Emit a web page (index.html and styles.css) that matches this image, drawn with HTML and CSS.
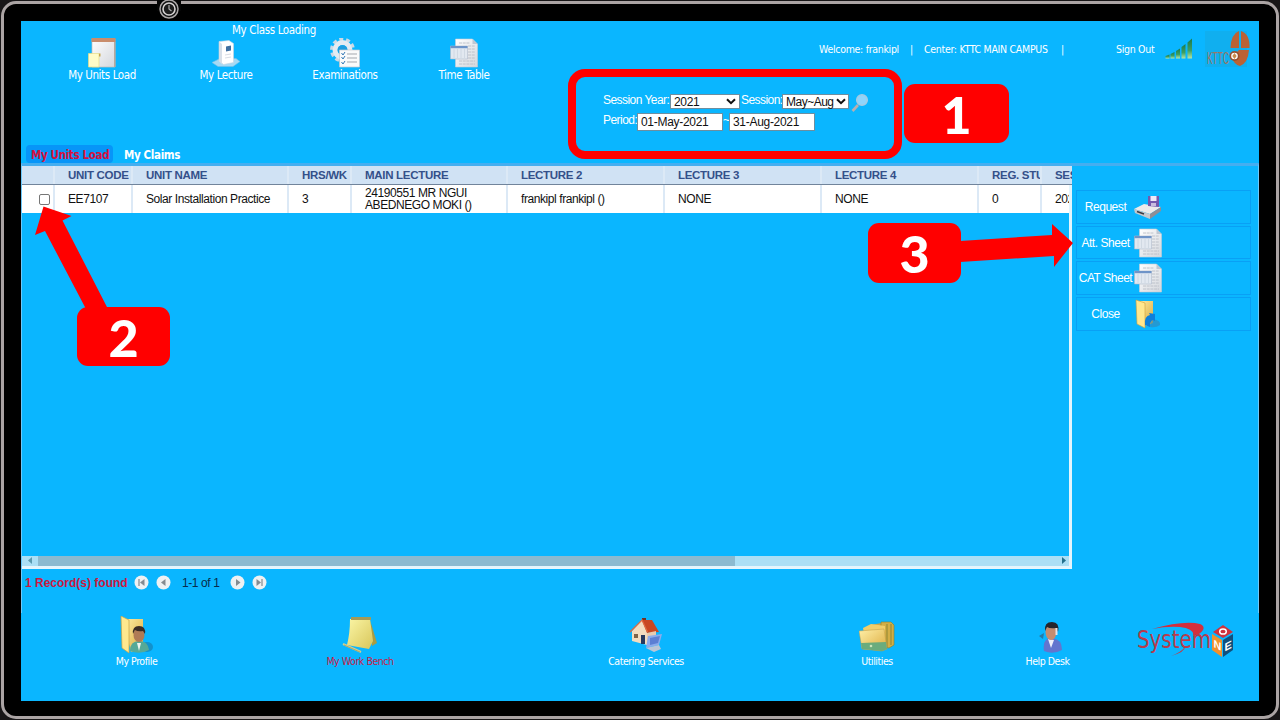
FILE: index.html
```html
<!DOCTYPE html>
<html lang="en">
<head>
<meta charset="utf-8">
<title>My Units Load</title>
<link rel="stylesheet" href="styles.css">
</head>
<body>
<svg class="defs" width="0" height="0">
  <defs>
    <linearGradient id="gold" x1="0" y1="0" x2="1" y2="1"><stop offset="0" stop-color="#fff0a8"/><stop offset="1" stop-color="#dba93c"/></linearGradient>
    <linearGradient id="paper" x1="0" y1="0" x2="1" y2="1"><stop offset="0" stop-color="#ffffff"/><stop offset="1" stop-color="#d3d6dc"/></linearGradient>
    <linearGradient id="note" x1="0" y1="0" x2="1" y2="1"><stop offset="0" stop-color="#fbf6a6"/><stop offset="1" stop-color="#d8c65a"/></linearGradient>
    <linearGradient id="bars" x1="0" y1="0" x2="0" y2="1"><stop offset="0" stop-color="#1b7a4c"/><stop offset=".6" stop-color="#3f9f62"/><stop offset="1" stop-color="#b6e6a8"/></linearGradient>
    <symbol id="sheet" viewBox="0 0 28 30">
      <path d="M5.500 1h17l5 5v23h-22z" fill="url(#paper)" stroke="#c4ccd6" stroke-width=".6"/>
      <path d="M22.500 1l5 5h-5z" fill="#bfc7d2"/>
      <path d="M9 5h11M18 8h7M18 11h7M18 14h7M18 17h7M18 20h7M9 23h16M9 26h16" stroke="#b9bdc6" stroke-width=".9" stroke-dasharray="3 .7"/>
      <path d="M.5 8h17v13h-17z" fill="#e2e8f0" stroke="#aeb9ca" stroke-width=".6"/>
      <path d="M.5 8h17v2.200h-17z" fill="#6f94c8"/>
      <path d="M4 11v9M7.500 11v9M11 11v9M14.500 11v9" stroke="#ccd4e0" stroke-width=".8"/>
    </symbol>
  </defs>
</svg>
<div class="device">
  <div class="screen">
    <header class="header">
      <div class="header-left">
        <div class="title">My Class Loading</div>
        <nav class="topnav">
          <a class="nav-item w124"><svg width="30" height="30" viewBox="0 0 30 30"><path d="M5 1h23v28H5z" fill="url(#paper)" stroke="#c9bfb6" stroke-width=".7"/><path d="M4.500 0h24v4h-24z" fill="#c98d6c"/><path d="M27 4h1.500v25H27z" fill="#b9a89c"/><path d="M1.500 15.500h10.500v13.500H1.500z" fill="#fffcc8" stroke="#e6dc85" stroke-width=".7"/><path d="M12 15.500h1.500v3H12z" fill="#c5a54f"/></svg><span>My Units Load</span></a>
          <a class="nav-item w124"><svg width="30" height="30" viewBox="0 0 30 30"><path d="M1 24.500l8-4h16l4 3-7 5H7z" fill="#a5d9f4" stroke="#74bfe6" stroke-width=".6"/><path d="M8 3.500l10-1 4.500 3v19l-10 2L8 23z" fill="#fff" stroke="#cad4df" stroke-width=".6"/><path d="M8 3.500l3 2.500v20L8 23z" fill="#d7dfe8"/><path d="M15 8.500l5-1v5l-5 1z" fill="#3f6fa0"/><path d="M14 17l6-1M14 20l6-1" stroke="#d8dde4"/></svg><span>My Lecture</span></a>
          <a class="nav-item w114"><svg width="30" height="30" viewBox="0 0 30 30"><circle cx="12.500" cy="12" r="11" fill="none" stroke="#cdd9e4" stroke-width="3" stroke-dasharray="4 2.900"/><circle cx="12.500" cy="12" r="7.500" fill="none" stroke="#e4ebf2" stroke-width="5"/><circle cx="12.500" cy="12" r="4.800" fill="#1e9ee0"/><path d="M9.500 12h20v17h-20z" fill="#fafafa" stroke="#c4c8ce" stroke-width=".7"/><path d="M17 16h10M17 20h10M17 24h10" stroke="#a3a7ad" stroke-width="1"/><path d="M11.500 15l1.500 2 2-3M11.500 19l1.500 2 2-3M11.500 24l1.500 2 2-3" stroke="#3478b5" fill="none"/></svg><span>Examinations</span></a>
          <a class="nav-item w124"><svg width="28" height="30"><use href="#sheet"/></svg><span>Time Table</span></a>
        </nav>
        <div class="tabs"><span class="tab tab-active">My Units Load</span><span class="tab">My Claims</span></div>
      </div>
      <div class="header-right">
        <div class="userbar">
          <span class="u-welcome">Welcome: frankipl</span><span class="u-sep1">|</span><span class="u-center">Center: KTTC MAIN CAMPUS</span><span class="u-sep2">|</span><span class="u-out">Sign Out</span>
          <svg class="signal" width="28" height="22" viewBox="0 0 28 22"><g fill="url(#bars)"><path d="M.5 18l4-1.500v4h-4z"/><path d="M5.500 16l4-2v6.500h-4z"/><path d="M11 13l4-2.500v10h-4z"/><path d="M16.500 9l4-3v14.500h-4z"/><path d="M22.500 4.500L27 .5v20h-4.500z"/></g></svg>
          <svg class="kttc" width="46" height="36" viewBox="0 0 46 36"><path d="M0 0h42v36H0z" fill="#10afef"/><path d="M34 0q-8 3-8.500 17h8.500z" fill="#bb6235"/><path d="M36 0q9 3 8.500 17H36z" fill="#bb6235"/><path d="M44 19q-1 13-9 16-6-1-8-9l7-7z" fill="#bb6235"/><text x="2" y="33" class="kttc-text" textLength="22" lengthAdjust="spacingAndGlyphs">KTTC</text><circle cx="29.500" cy="25" r="5" fill="#9a512d"/><circle cx="29.500" cy="25" r="3.300" fill="#fff"/><path d="M29.500 22l2.200 3-2.200 3-2.200-3z" fill="#c98b4a"/></svg>
        </div>
        <form class="filter">
          <div class="frow">
            <span class="lbl lbl-year">Session Year:</span><span class="field sel-year">2021<svg width="10" height="7" viewBox="0 0 10 7"><path d="M1 1.200l4 4 4-4" fill="none" stroke="#111" stroke-width="2"/></svg></span><span class="lbl lbl-session">Session:</span><span class="field sel-session">May~Aug<svg width="10" height="7" viewBox="0 0 10 7"><path d="M1 1.200l4 4 4-4" fill="none" stroke="#111" stroke-width="2"/></svg></span>
            <svg class="lens" width="18" height="20" viewBox="0 0 18 20"><path d="M7 12l-5.500 6" stroke="#b8aeb0" stroke-width="2.600"/><circle cx="11" cy="7" r="5.300" fill="#8fd4fb" stroke="#a5cbe4" stroke-width="1.500"/></svg>
          </div>
          <div class="frow frow2">
            <span class="lbl lbl-period">Period:</span><span class="field date">01-May-2021</span><span class="lbl tilde">~</span><span class="field date">31-Aug-2021</span>
          </div>
        </form>
      </div>
    </header>

    <main class="main">
      <section class="grid-area">
        <div class="gridbox">
          <div class="row head"><span></span><span>UNIT CODE</span><span>UNIT NAME</span><span>HRS/WK</span><span>MAIN LECTURE</span><span>LECTURE 2</span><span>LECTURE 3</span><span>LECTURE 4</span><span>REG. STU</span><span>SES</span></div>
          <div class="row body"><span class="check"><i class="box"></i></span><span>EE7107</span><span>Solar Installation Practice</span><span>3</span><span>24190551 MR NGUI<br>ABEDNEGO MOKI ()</span><span>frankipl frankipl ()</span><span>NONE</span><span>NONE</span><span>0</span><span>202</span></div>
          <div class="empty"></div>
          <div class="scroll">
            <svg width="16" height="9" viewBox="0 0 16 9"><path d="M10 1v7L6 4.500z" fill="#5a9aaf"/></svg>
            <div class="thumb"></div>
            <svg class="scroll-right" width="10" height="9" viewBox="0 0 10 9"><path d="M3 1v7l4-3.500z" fill="#22708c"/></svg>
          </div>
        </div>
        <div class="pager">
          <span class="found">1 Record(s) found</span>
          <svg width="15" height="15" viewBox="0 0 15 15"><circle cx="7.500" cy="7.500" r="7" fill="#eef1f3"/><path d="M10.500 4v7L6 7.500z" fill="#858b91"/><path d="M5 4v7" stroke="#858b91" stroke-width="1.200"/></svg>
          <svg class="p-prev" width="15" height="15" viewBox="0 0 15 15"><circle cx="7.500" cy="7.500" r="7" fill="#eef1f3"/><path d="M9.500 4v7L5 7.500z" fill="#858b91"/></svg>
          <span class="pages">1-1 of 1</span>
          <svg width="15" height="15" viewBox="0 0 15 15"><circle cx="7.500" cy="7.500" r="7" fill="#eef1f3"/><path d="M6 4v7l4.500-3.500z" fill="#858b91"/></svg>
          <svg class="p-last" width="15" height="15" viewBox="0 0 15 15"><circle cx="7.500" cy="7.500" r="7" fill="#eef1f3"/><path d="M4.500 4v7L9 7.500z" fill="#858b91"/><path d="M10 4v7" stroke="#858b91" stroke-width="1.200"/></svg>
        </div>
      </section>
      <aside class="side">
        <div class="action"><span>Request</span><svg width="28" height="28" viewBox="0 0 28 28"><path d="M0 16l10-5 17 3-11 7z" fill="#eceaea"/><path d="M0 16l16 5v5L1 20z" fill="#c7c8cc"/><path d="M16 21l11-7v4l-11 8z" fill="#8e8e96"/><path d="M3 18.500l7 2.500" stroke="#393b44" stroke-width="1.500"/><path d="M14 3h11v11l-11-1z" fill="#7359ad"/><path d="M16.500 3h6v5h-6z" fill="#eee8f8"/><path d="M17 10h5v3h-5z" fill="#c8bddf"/></svg></div>
        <div class="action"><span>Att. Sheet</span><svg width="28" height="30"><use href="#sheet"/></svg></div>
        <div class="action"><span>CAT Sheet</span><svg width="28" height="30"><use href="#sheet"/></svg></div>
        <div class="action"><span>Close</span><svg width="28" height="30" viewBox="0 0 28 30"><path d="M3 2h16v22l-7 3z" fill="url(#gold)"/><path d="M2 1l9 3v25l-8-4z" fill="#ffe78e" stroke="#cfa03b" stroke-width=".6"/><path d="M18 20q9 1 8 6-4 3-10 2z" fill="#3387b7" opacity=".6"/><path d="M11 26q-1-9 5-10l-1-2 6 1v7l-2-1q-3 1-3 7z" fill="#0c7fdb"/></svg></div>
      </aside>
    </main>

    <footer class="footer">
      <a class="foot-item f1"><svg width="36" height="38" viewBox="0 0 36 38"><path d="M4 3h20v29l-12 4z" fill="url(#gold)"/><path d="M2 0l8 4v33l-7-5z" fill="#ffe88e" stroke="#caa344" stroke-width=".7"/><ellipse cx="28" cy="31" rx="6" ry="5" fill="#1978a8" opacity=".6"/><path d="M11 35q0-10 9-10t10 9q-9 5-19 1z" fill="#55a997"/><path d="M18 27l2 8 2-8z" fill="#edf4ee"/><ellipse cx="20" cy="19" rx="5.500" ry="7" fill="#b07b56"/><path d="M14 18q-1-8 6-8t6 8l-2-3q-5 1-8-1z" fill="#3a2b25"/></svg><span>My Profile</span></a>
      <a class="foot-item f2 current"><svg width="36" height="38" viewBox="0 0 36 38"><path d="M28 4l7 23-5 3z" fill="#a99c42"/><path d="M8 3h20l3 22-4 8-22-4Q8 17 8 3z" fill="url(#note)"/><path d="M9 1h20v3H9z" fill="#a49a58"/><path d="M1 28l18 8" stroke="#d3cf8d" stroke-width="2"/><path d="M2 29l16 7" stroke="#84804c" stroke-width=".5"/></svg><span>My Work Bench</span></a>
      <a class="foot-item f3"><svg width="36" height="38" viewBox="0 0 36 38"><path d="M14 2h4v8h-4z" fill="#713225"/><path d="M4 15l10-11 5 11v14L4 25z" fill="#f3dcbf"/><path d="M14 4h10l7 12-12 1z" fill="#c94722"/><path d="M2 16L14 4l5.500 12" fill="none" stroke="#df6941" stroke-width="1.300"/><path d="M19 17l9-2v11l-9 3z" fill="#e8cbb0"/><path d="M13 19h4v9h-4z" fill="#26395f"/><path d="M6 18h4v4H6z" fill="#806449"/><path d="M20 20l14-2-3 11-13 3z" fill="#8babeb"/><path d="M22 22l10-2-2 7-8 2z" fill="#5c7fd3"/><path d="M18 32l13-3 2 4-7 3z" fill="#bbc6d5"/></svg><span>Catering Services</span></a>
      <a class="foot-item f4"><svg width="36" height="38" viewBox="0 0 36 38"><path d="M11 9l12-2 2 3v21l-10 1z" fill="#d3a544"/><path d="M22 6h10l3 3v20l-5 3-8-2z" fill="#d2ae46" stroke="#86802f" stroke-width=".6"/><path d="M28 8v23M32 8v21" stroke="#8c8534" stroke-width="1"/><path d="M4 12l8-4 14 2v22H8z" fill="#f1ce6b"/><path d="M0 15l25-2 3 20-5 2L3 33z" fill="url(#gold)" stroke="#bf9844" stroke-width=".5"/><path d="M2 27l25-1 1 7-5 2-20-2z" fill="#6aac7d"/><circle cx="12" cy="30" r="1.300" fill="#cae4b9"/></svg><span>Utilities</span></a>
      <a class="foot-item f5"><svg width="36" height="38" viewBox="0 0 36 38"><path d="M14 35q-2-13 8-13 10 1 10 12-9 5-18 1z" fill="#6275ce"/><path d="M18 23l3 9 3-8z" fill="#eef0fa"/><ellipse cx="21" cy="16" rx="5.500" ry="8" fill="#c48c6f"/><path d="M15 15q-1-9 7-9t6 10l-2-4q-6 1-9-1z" fill="#25252c"/><path d="M26.500 12v7" fill="none" stroke="#e5e4e9" stroke-width="2"/><path d="M14 17l-5 3 4 3z" fill="#267ba6"/></svg><span>Help Desk</span></a>
      <svg class="system-logo" width="97" height="38" viewBox="0 0 97 38"><path d="M15 7Q47-2 63 2q5 2 3 6-3 5-10 6 2-7-13-9Q30 4 15 7z" fill="#d32f3d"/><text x="0" y="26" class="system-text" textLength="74" lengthAdjust="spacingAndGlyphs">System</text><path d="M34 34q9-3 14-9 0 5-14 9z" fill="#c8363f"/><path d="M86 3l10 7-10 6-10-6z" fill="#cf333d"/><path d="M75 12l10 6v17l-10-7z" fill="#f0912c"/><path d="M86 18l10-6v16l-10 7z" fill="#124f7c"/><ellipse cx="86" cy="9.500" rx="3.300" ry="2.600" fill="none" stroke="#fff" stroke-width="1.500"/><text class="cube" transform="matrix(1 .5 0 1 76.500 25)">N</text><text class="cube" transform="matrix(1 -.5 0 1 87.500 29.500)">E</text></svg>
    </footer>
  </div>
  <svg class="clock" width="24" height="22" viewBox="0 0 24 22"><path d="M0 0h24v12H0z" fill="#050505"/><circle cx="12" cy="10" r="9" fill="#111" stroke="#aaa6a6" stroke-width="1.500"/><circle cx="12" cy="10" r="6" fill="#1d1d1d" stroke="#d5d2d2" stroke-width="1.600"/><path d="M12 6v4l2.500 2" stroke="#aaa" fill="none" stroke-width="1.200"/></svg>
</div>
<svg class="arrows" width="1280" height="720" viewBox="0 0 1280 720"><g fill="#f00"><path d="M43.500 206.500L71.500 216 62.500 220.500 108 309H86L45 231l-10 4z"/><path d="M960 241l92-6v-11l21 19-19 24v-11l-94 6z"/></g></svg>
<div class="highlight"></div>
<div class="callout c1">1</div>
<div class="callout c2">2</div>
<div class="callout c3">3</div>
</body>
</html>
```
FILE: styles.css
```css
* { box-sizing: border-box; }
body { margin: 0; width: 1280px; height: 720px; overflow: hidden; background: #181617; font-family: "DejaVu Sans Condensed", "Noto Sans", sans-serif; font-size: 11px; color: #fff; position: relative; }
svg { display: block; flex: none; }
.defs { position: absolute; }
.device { width: 1278px; height: 718px; margin: 1px; border: 3px solid #aba4a4; border-radius: 15px; background: #000; padding: 17px; position: relative; }
.clock { position: absolute; left: 153px; top: -5px; }
.screen { width: 1238px; height: 680px; background: #0ab6ff; display: flex; flex-direction: column; white-space: nowrap; }

.header { height: 142px; display: flex; flex: none; }
.header-left { width: 526px; display: flex; flex-direction: column; }
.title { height: 17px; line-height: 18px; width: 506px; text-align: center; font-size: 11.500px; letter-spacing: -.35px; }
.topnav { display: flex; height: 45px; padding-left: 19px; }
.nav-item { display: flex; flex-direction: column; align-items: center; line-height: 15px; font-size: 11.500px; letter-spacing: -.4px; }
.w124 { width: 124px; }
.w114 { width: 114px; }
.tabs { display: flex; margin-top: auto; height: 18px; padding-left: 5px; gap: 1px; }
.tab { padding: 0 4px 0 10px; line-height: 20px; font-weight: bold; font-size: 11.500px; letter-spacing: -.35px; }
.tab-active { width: 87px; padding: 0 0 0 5px; background: #0795f8; border-radius: 4px; color: #d5103c; }

.header-right { width: 712px; display: flex; flex-direction: column; }
.userbar { height: 55px; display: flex; align-items: center; font-size: 10.500px; }
.userbar span { letter-spacing: -.3px; }
.u-welcome { margin-left: 272px; width: 91px; }
.u-sep1 { width: 14px; }
.u-center { width: 137px; }
.u-sep2 { width: 55px; }
.u-out { width: 49px; }
.signal { margin-right: 12px; }
.filter { padding: 17px 0 0 56px; font-family: "Liberation Sans", sans-serif; font-size: 12px; }
.frow { display: flex; height: 20px; align-items: flex-start; }
.lbl { line-height: 14px; letter-spacing: -.55px; }
.lbl-year { width: 67px; }
.lbl-session { width: 42px; padding-left: 1px; }
.lbl-period { width: 34px; }
.tilde { width: 6px; }
.field { background: #fff; color: #111; border: 1px solid #6d8ea0; height: 15px; line-height: 14px; padding: 0 3px; display: flex; justify-content: space-between; align-items: center; font-size: 12px; letter-spacing: -.3px; }
.sel-year { width: 70px; margin-top: 1px; }
.sel-session { width: 67px; margin-top: 1px; padding: 0 2px 0 3px; letter-spacing: -.5px; }
.lens { margin-left: 2px; }
.date { width: 86px; height: 18px; }

.main { height: 450px; display: flex; flex: none; border: 1px solid #6cc9fb; border-top: 3px solid #45aef0; border-bottom: 0; }
.grid-area { width: 1050px; }
.gridbox { height: 403px; border-right: 3px solid #e4f5fd; border-bottom: 3px solid #e4f5fd; display: flex; flex-direction: column; }
.row { display: grid; grid-template-columns: 33px 78px 156px 63px 156px 157px 157px 157px 63px 27px; font-family: "Liberation Sans", sans-serif; }
.row span { overflow: hidden; padding-left: 13px; border-right: 2px solid #dce9f6; display: flex; align-items: center; }
.row span:last-child { border-right: 0; }
.head { height: 19px; width: 1050px; background: #d0e2f4; color: #34508a; font-weight: bold; font-size: 11.500px; letter-spacing: -.3px; border-bottom: 1px solid #71849b; }
.head span:last-child { width: 30px; }
.body { height: 28px; background: #fff; color: #111; font-size: 12px; line-height: 12px; letter-spacing: -.42px; }
.row .check { padding-left: 17px; }
.box { width: 11px; height: 11px; border: 1px solid #767676; border-radius: 2px; }
.empty { flex: 1; }
.scroll { height: 10px; display: flex; background: #abdff5; }
.thumb { width: 697px; background: #8bbad0; }
.scroll-right { margin-left: auto; }
.pager { display: flex; align-items: center; height: 27px; padding-left: 3px; font-family: "Liberation Sans", sans-serif; }
.found { width: 109px; color: #cb1840; font-weight: bold; font-size: 12px; }
.p-prev { margin-left: 7px; }
.pages { width: 59px; padding-left: 11px; color: #082b4c; font-size: 12px; letter-spacing: -.4px; }
.p-last { margin-left: 7px; }
.side { padding: 24px 0 0 4px; display: flex; flex-direction: column; gap: 2px; font-family: "Liberation Sans", sans-serif; font-size: 12px; }
.action { width: 175px; height: 33.700px; border: 1px solid #09a0f5; display: flex; align-items: center; }
.action span { width: 57px; text-align: center; letter-spacing: -.45px; }

.footer { flex: 1; display: flex; align-items: flex-start; padding-top: 3px; font-size: 10.500px; }
.foot-item { width: 100px; display: flex; flex-direction: column; align-items: center; line-height: 15px; letter-spacing: -.45px; }
.current { color: #c41c48; }
.f1 { margin-left: 65.500px; }
.f2 { margin-left: 123.500px; }
.f3 { margin-left: 186px; }
.f4 { margin-left: 131px; }
.f5 { margin-left: 70.500px; }
.system-logo { margin: 6px 0 0 39px; }
.system-text { font: 24px "DejaVu Sans", sans-serif; fill: #b83b4c; }
.cube { font: bold 11px "Liberation Sans", sans-serif; fill: #fff; }
.kttc-text { font: 17px "Liberation Sans", sans-serif; fill: #9b7765; }

.arrows { position: absolute; left: 0; top: 0; }
.highlight { position: absolute; left: 568px; top: 69px; width: 334px; height: 90px; border: 8px solid #f00; border-radius: 17px; }
.callout { position: absolute; background: #f00; border-radius: 11px; width: 93px; height: 59px; line-height: 60px; text-align: center; font-family: Lato, sans-serif; font-weight: 900; font-size: 52px; }
.c1 { left: 904px; top: 84px; width: 105px; }
.c2 { left: 77px; top: 307px; }
.c3 { left: 868px; top: 223px; height: 60px; }
```
